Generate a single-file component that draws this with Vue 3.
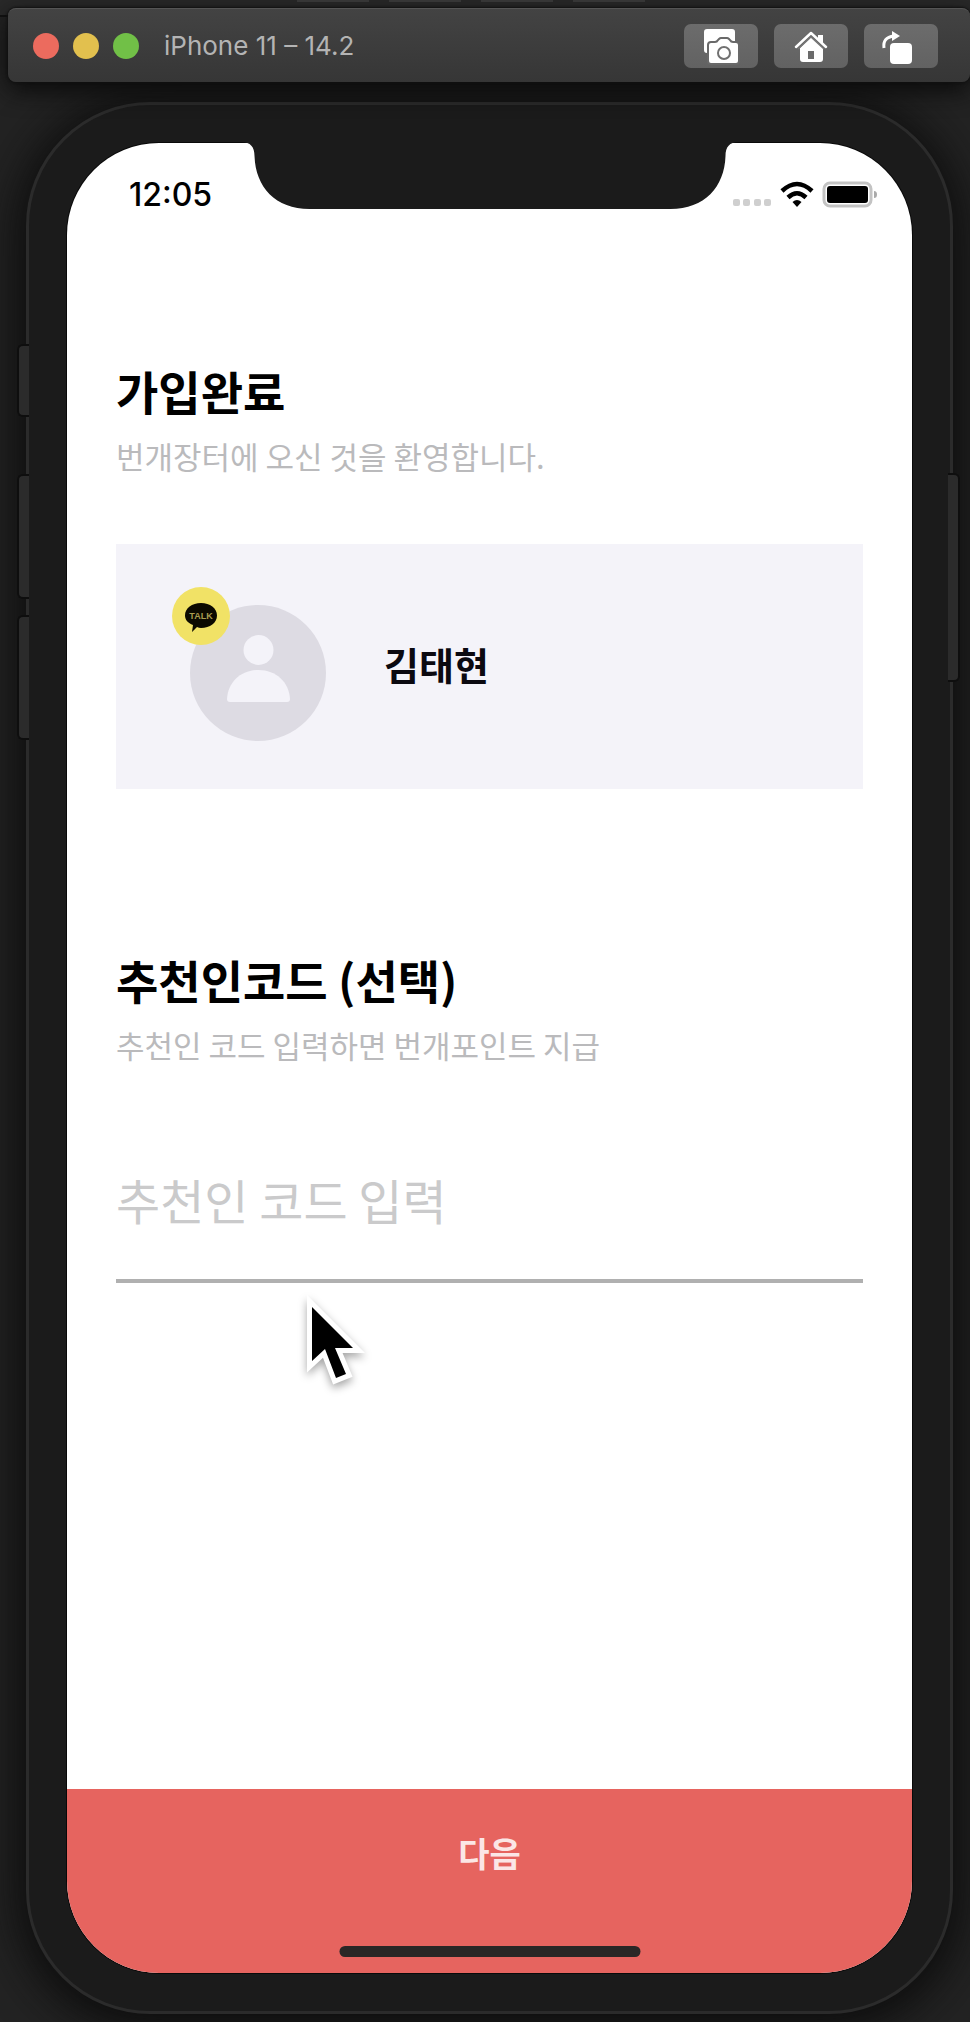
<script setup>
import { ref } from 'vue'

const code = ref('')
const tabs = [1, 2, 3, 4]
</script>

<template>
  <div class="desktop">
    <div class="backdrop" aria-hidden="true">
      <span v-for="t in tabs" :key="t" class="backdrop-tab"></span>
    </div>

    <header class="titlebar">
      <div class="lights">
        <button class="light red" type="button" aria-label="Close"></button>
        <button class="light yellow" type="button" aria-label="Minimize"></button>
        <button class="light green" type="button" aria-label="Zoom"></button>
      </div>
      <div class="window-title">iPhone 11 – 14.2</div>
      <div class="tools">
        <button class="tool" type="button" aria-label="Screenshot">
          <svg width="74" height="44" viewBox="0 0 74 44">
            <path d="M23 5h25q3 0 3 3v20H23v1q-3 0-3-3V8q0-3 3-3z" fill="#fff" />
            <path d="M27 18h4q2 0 3-2l1-1q1-1 2-1h6q1 0 2 1l1 1q1 2 3 2h3q3 0 3 3v16q0 3-3 3H27q-3 0-3-3V21q0-3 3-3z" fill="#fff" stroke="#696969" stroke-width="2" />
            <circle cx="40" cy="29" r="6" fill="none" stroke="#707070" stroke-width="2" />
          </svg>
        </button>
        <button class="tool" type="button" aria-label="Home">
          <svg width="74" height="44" viewBox="0 0 74 44">
            <path d="M37 13L49 24v11q0 3-3 3H29q-3 0-3-3V24z" fill="#fff" />
            <path d="M22 23L37 9l15 14" fill="none" stroke="#fff" stroke-width="2.500" stroke-linecap="round" stroke-linejoin="round" />
            <path d="M24 25L37 13l13 12" fill="none" stroke="#777" stroke-width="1.500" />
            <path d="M44 11h5v9l-5-5z" fill="#fff" />
            <rect x="34" y="27" width="6" height="8" fill="#6b6b6b" />
          </svg>
        </button>
        <button class="tool" type="button" aria-label="Rotate">
          <svg width="74" height="44" viewBox="0 0 74 44">
            <rect x="26" y="19" width="22" height="21" rx="4" fill="#fff" />
            <path d="M20 24c-1-7 2-11 10-12" fill="none" stroke="#fff" stroke-width="3" />
            <path d="M28 7l8 5-8 5z" fill="#fff" />
          </svg>
        </button>
      </div>
    </header>

    <div class="phone">
      <span class="side left mute"></span>
      <span class="side left volume-up"></span>
      <span class="side left volume-down"></span>
      <span class="side right power"></span>

      <div class="screen">
        <svg class="notch" width="497" height="68" viewBox="0 0 497 68" aria-hidden="true">
          <path d="M0 0C9 0 13 5 13 14C14 45 34 67 68 67H429C463 67 483 45 484 14C484 5 488 0 497 0Z" fill="#1b1b1b" />
        </svg>

        <div class="status">
          <time>12:05</time>
          <svg width="148" height="30" viewBox="0 0 148 30" aria-hidden="true">
            <g fill="#cfcfcf">
              <rect x="2" y="19" width="7" height="7" rx="2" />
              <rect x="12" y="19" width="7" height="7" rx="2" />
              <rect x="23" y="19" width="7" height="7" rx="2" />
              <rect x="33" y="19" width="7" height="7" rx="2" />
            </g>
            <g fill="none" stroke="#000" stroke-width="4.500">
              <path d="M51 11Q66-3 81 11" />
              <path d="M57 17.500Q66 9 75 17.500" />
            </g>
            <path d="M61.500 22Q66 18 70.500 22L66 27z" />
            <rect x="93" y="3" width="47" height="23" rx="6" fill="#fff" stroke="#c3c3c3" stroke-width="3" />
            <rect x="96" y="6" width="41" height="17" rx="3" />
            <path d="M143 11q3 0 3 3.500t-3 3.500z" fill="#aaa" />
          </svg>
        </div>

        <main class="content">
          <h1>가입완료</h1>
          <p class="hint">번개장터에 오신 것을 환영합니다.</p>

          <section class="card">
            <svg class="avatar" width="154" height="154" viewBox="0 0 154 154" role="img" aria-label="카카오톡 프로필">
              <circle cx="86" cy="86" r="68" fill="#dddbe3" />
              <circle cx="86.500" cy="63" r="15" fill="#f4f3f9" />
              <path d="M58 115q-3 0-3-3C56 95 69 83 86.500 83S117 95 118 112q0 3-3 3z" fill="#f4f3f9" />
              <circle cx="29" cy="29" r="29" fill="#f1e266" />
              <path d="M29 16c9 0 16 5 16 12.500S38 41 29 41q-2 0-4-1l-5 5 1-7c-5-2-8-5-8-9.500C13 21 20 16 29 16z" fill="#0c0a00" />
              <text x="29" y="32" class="talk" text-anchor="middle">TALK</text>
            </svg>
            <strong>김태현</strong>
          </section>

          <h2><label for="code">추천인코드 (선택)</label></h2>
          <p class="hint">추천인 코드 입력하면 번개포인트 지급</p>
          <input id="code" v-model="code" type="text" placeholder="추천인 코드 입력" />
        </main>

        <button class="next" type="button">다음</button>
        <span class="home-bar"></span>

        <svg class="cursor" width="84" height="104" viewBox="0 0 84 104" aria-hidden="true">
          <path d="M12 12V66L25 54L36 83L46 79L35 53H53Z" fill="#000" stroke="#fff" stroke-width="10" paint-order="stroke" />
        </svg>
      </div>
    </div>
  </div>
</template>

<style>
body {
  margin: 0;
  background: #222;
}
</style>

<style scoped>
.desktop {
  box-sizing: border-box;
  display: flex;
  flex-direction: column;
  min-height: 100vh;
  padding: 8px 0 8px 8px;
  position: relative;
  overflow: hidden;
  background: #232323;
  font-family: Inter, "Noto Sans CJK KR", sans-serif;
}
.backdrop {
  position: absolute;
  inset: 0 0 auto 0;
  box-sizing: border-box;
  height: 17px;
  display: flex;
  gap: 20px;
  padding-left: 297px;
  background: #292929;
  border-bottom: 2px solid #121212;
}
.backdrop-tab {
  width: 72px;
  height: 2px;
  background: #3c3c3c;
}
.titlebar {
  position: relative;
  z-index: 1;
  box-sizing: border-box;
  display: flex;
  align-items: center;
  height: 74px;
  padding: 0 32px 0 25px;
  border-top: 1px solid #555;
  border-radius: 8px;
  background: linear-gradient(#434343, #363636);
  box-shadow: 0 0 2px 1px #111, 0 8px 24px #0a0a0a;
}
.lights {
  display: flex;
  gap: 14px;
}
.light {
  width: 26px;
  height: 26px;
  padding: 0;
  border: 0;
  border-radius: 50%;
}
.red { background: #ec6b5e; }
.yellow { background: #e2c04e; }
.green { background: #71c047; }
.window-title {
  margin-left: 25px;
  font-size: 26px;
  line-height: 32px;
  color: #b4b4b4;
}
.tools {
  display: flex;
  gap: 16px;
  margin-left: auto;
}
.tool {
  width: 74px;
  height: 44px;
  padding: 0;
  border: 0;
  border-radius: 7px;
  background: linear-gradient(#6c6c6c, #626262);
}
.tool svg { display: block; }
.phone {
  position: relative;
  flex: 1;
  display: flex;
  margin: 20px 17px 0 18px;
  padding: 38px;
  border: 3px solid #2b2b2b;
  border-radius: 124px;
  background: #1b1b1b;
  box-shadow: 0 6px 48px 8px #0b0b0b;
}
.side {
  position: absolute;
  width: 10px;
  border: solid #0e0e0e;
  background: #2b2b2b;
}
.left {
  left: -12px;
  border-width: 2px 0 2px 2px;
  border-radius: 6px 0 0 6px;
}
.right {
  right: -10px;
  border-width: 2px 2px 2px 0;
  border-radius: 0 6px 6px 0;
}
.mute { top: 239px; height: 69px; }
.volume-up { top: 369px; height: 121px; }
.volume-down { top: 510px; height: 121px; }
.power { top: 368px; height: 205px; }
.screen {
  position: relative;
  flex: 1;
  display: flex;
  flex-direction: column;
  border-radius: 92px;
  background: #fff;
  box-shadow: 0 0 0 1px #090909;
}
.notch {
  position: absolute;
  top: -1px;
  left: 50%;
  transform: translateX(-50%);
}
.status {
  display: flex;
  align-items: center;
  justify-content: space-between;
  height: 104px;
  padding: 0 33px 0 62px;
}
.status time {
  font-size: 32px;
  font-weight: 500;
  line-height: 40px;
  color: #000;
}
.content {
  display: flex;
  flex-direction: column;
  padding: 113px 49px 48px;
  font-family: "Noto Sans CJK KR", sans-serif;
}
h1,
h2 {
  margin: 0;
  font-size: 46px;
  font-weight: 700;
  line-height: 60px;
  color: #000;
}
.hint {
  margin: 14px 0 0;
  font-size: 31px;
  font-weight: 400;
  line-height: 44px;
  color: #bababc;
}
.card {
  box-sizing: border-box;
  display: flex;
  align-items: center;
  gap: 58px;
  min-height: 245px;
  margin: 66px 0 160px;
  padding: 43px 56px 48px;
  background: #f4f3f9;
}
.avatar { flex: none; }
.talk {
  font: 700 9px "Liberation Sans", sans-serif;
  fill: #a89d50;
}
.card strong {
  font-size: 38px;
  font-weight: 700;
  line-height: 48px;
  color: #0b0910;
}
input {
  box-sizing: border-box;
  width: 100%;
  height: 120px;
  margin-top: 96px;
  padding: 0 0 44px;
  border: 0;
  border-bottom: 4px solid #b0b0b0;
  border-radius: 0;
  outline: 0;
  background: transparent;
  font: 400 48px "Noto Sans CJK KR", sans-serif;
  color: #000;
}
input::placeholder {
  color: #cacacb;
  opacity: 1;
}
.next {
  display: block;
  margin-top: auto;
  padding: 40px 0 96px;
  border: 0;
  border-radius: 0 0 92px 92px;
  background: #e6645f;
  font: 700 34px/48px "Noto Sans CJK KR", sans-serif;
  color: #fbe6e6;
}
.home-bar {
  position: absolute;
  bottom: 16px;
  left: 50%;
  width: 301px;
  height: 11px;
  border-radius: 6px;
  background: #2a2726;
  transform: translateX(-50%);
}
.cursor {
  position: absolute;
  top: 1152px;
  left: 233px;
  filter: drop-shadow(0 4px 4px rgba(0, 0, 0, 0.35));
}
</style>
